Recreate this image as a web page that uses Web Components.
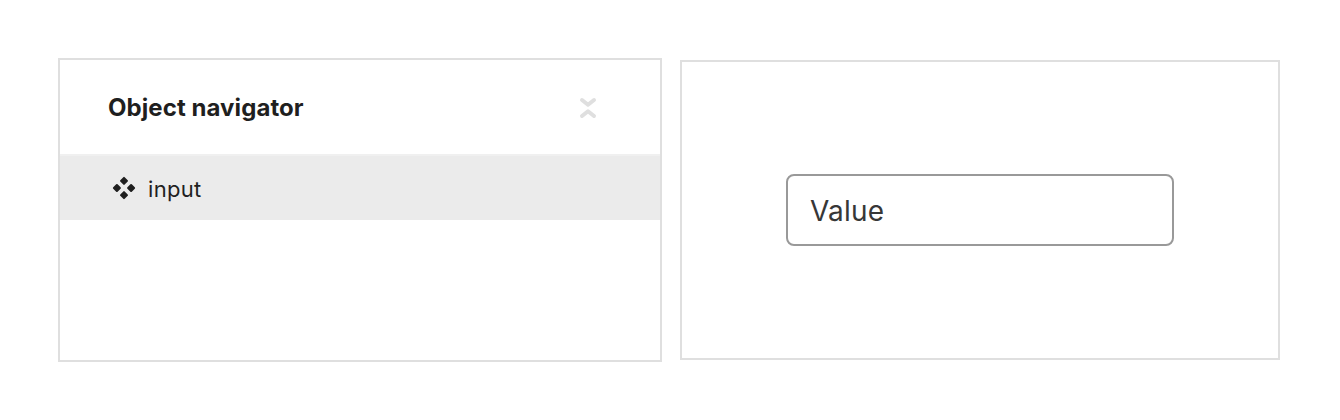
<!DOCTYPE html>
<html lang="en">
<head>
<meta charset="utf-8">
<title>Object navigator</title>
<style>
html,body{margin:0;height:100%;background:#fff}
body{font-family:Inter,"Liberation Sans",sans-serif;color:#1f1f1f;overflow:hidden}
</style>
</head>
<body>
<app-workspace>
  <object-navigator heading="Object navigator">
    <navigator-item>input</navigator-item>
  </object-navigator>
  <preview-canvas><text-field>Value</text-field></preview-canvas>
</app-workspace>
<script>
const define = (name, html) => {
  const template = document.createElement('template');
  template.innerHTML = html;
  customElements.define(name, class extends HTMLElement {
    constructor() {
      super();
      this.attachShadow({ mode: 'open' }).append(template.content.cloneNode(true));
    }
    connectedCallback() {
      const heading = this.shadowRoot.querySelector('h2');
      if (heading) heading.textContent = this.getAttribute('heading');
    }
  });
};

define('app-workspace', `
<style>
:host{display:flex;align-items:center;gap:18px;box-sizing:border-box;width:1340px;height:420px;padding:0 60px 0 58px}
</style><slot></slot>`);

define('object-navigator', `
<style>
:host{display:block;box-sizing:border-box;flex:none;width:604px;height:304px;border:2px solid #dfdfdf;background:#fff}
header{display:flex;align-items:center;justify-content:space-between;box-sizing:border-box;height:96px;padding:0 60px 0 48px;border-bottom:2px solid #f0f0f0}
h2{margin:0;padding-top:2px;font-size:24px;line-height:32px;font-weight:700;letter-spacing:.07px;white-space:nowrap}
svg{display:block;margin-top:2px}
</style>
<header><h2></h2>
<svg width="24" height="24" viewBox="0 0 24 24" fill="none" stroke="#dfdfdf" stroke-width="4" stroke-linecap="round" stroke-linejoin="round"><path d="M6 4l6 4.8L18 4M6 20l6-4.8 6 4.8"/></svg>
</header><slot></slot>`);

define('navigator-item', `
<style>
:host{display:flex;align-items:center;gap:12px;box-sizing:border-box;height:64px;padding-left:52px;background:#ebebeb;font-size:22px;line-height:32px;letter-spacing:.3px}
span{padding-top:2px}
</style>
<svg width="24" height="24" viewBox="0 0 24 24" fill="#1f1f1f" stroke="#1f1f1f" stroke-width="2" stroke-linejoin="round"><path d="M12 1.9l3 3-3 3-3-3zM4.9 9l3 3-3 3-3-3zM19.1 9l3 3-3 3-3-3zM12 16.1l3 3-3 3-3-3z"/></svg>
<span><slot></slot></span>`);

define('preview-canvas', `
<style>
:host{display:flex;align-items:center;justify-content:center;box-sizing:border-box;flex:none;width:600px;height:300px;border:2px solid #dfdfdf;background:#fff}
</style><slot></slot>`);

define('text-field', `
<style>
:host{display:flex;align-items:center;box-sizing:border-box;width:388px;height:72px;padding:2px 22px 0;border:2px solid #999;border-radius:8px;background:#fff;color:#373737;font-size:28px;line-height:40px;letter-spacing:.2px}
</style><slot></slot>`);
</script>
</body>
</html>
